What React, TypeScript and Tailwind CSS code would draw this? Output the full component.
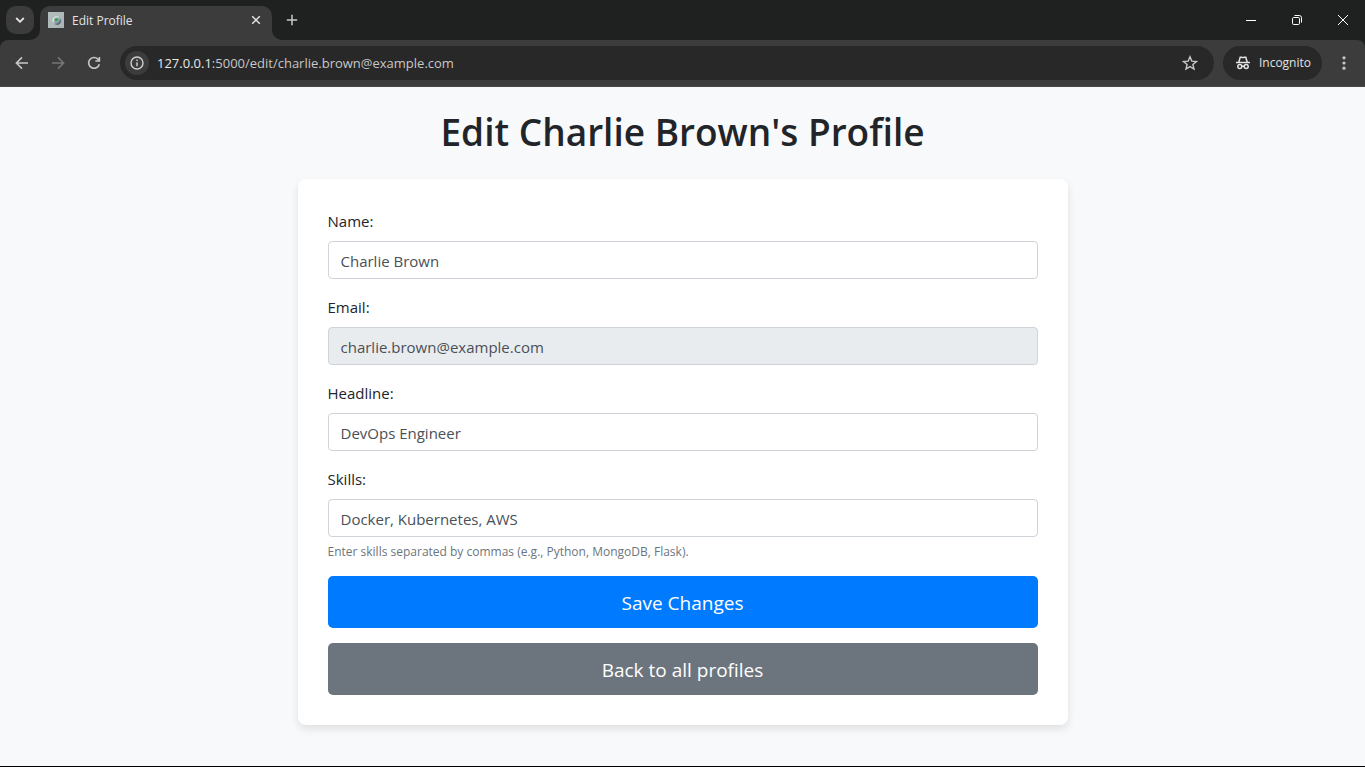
import { useState, type ReactNode } from "react";

function Flare({ className, flip }: { className: string; flip?: boolean }) {
  return (
    <svg viewBox="0 0 10 10" aria-hidden="true" className={className}>
      <path d={flip ? "M0 0a10 10 0 0 0 10 10H0Z" : "M10 0a10 10 0 0 1-10 10h10Z"} fill="#3c3c3c" />
    </svg>
  );
}

function Favicon() {
  return (
    <svg width="16" height="16" viewBox="0 0 16 16" aria-hidden="true">
      <defs>
        <linearGradient id="fav" x1="0" y1="0" x2="1" y2="1">
          <stop offset="0" stopColor="#b4bfbd" />
          <stop offset="1" stopColor="#a9b3b2" />
        </linearGradient>
        <linearGradient id="fav-ring" x1="0" y1="0" x2="1" y2="1">
          <stop offset="0.3" stopColor="#dde5e3" />
          <stop offset="0.8" stopColor="#4f6079" />
        </linearGradient>
      </defs>
      <rect width="16" height="16" fill="url(#fav)" />
      <circle cx="8.8" cy="8.6" r="4.4" fill="url(#fav-ring)" />
      <circle cx="8.6" cy="8.2" r="2.6" fill="#8fa5a4" />
      <circle cx="8.4" cy="7.8" r="1.5" fill="#22b14c" />
    </svg>
  );
}

function WindowButton({ label, children }: { label: string; children: ReactNode }) {
  return (
    <button aria-label={label} className="flex h-10 w-[46px] items-center justify-center pl-[2px]">
      <svg width="12" height="12" viewBox="0 0 12 12" fill="none" stroke="#fff" strokeWidth="1" aria-hidden="true">
        {children}
      </svg>
    </button>
  );
}

function TabStrip() {
  return (
    <div className="flex h-10 items-start">
      <button aria-label="Search tabs" className="mt-[6px] ml-[6px] flex size-7 items-center justify-center rounded-[10px] bg-[#3c3c3c]">
        <svg width="10" height="6" viewBox="0 0 10 6" fill="none" stroke="#e3e3e3" strokeWidth="1.8" aria-hidden="true">
          <path d="M1.2 1 5 4.8 8.8 1" />
        </svg>
      </button>
      <div className="relative mt-[6px] ml-[6px] flex h-[34px] w-[232px] items-center rounded-t-[10px] bg-[#3c3c3c] pr-[10px] pb-[6px] pl-2">
        <Flare className="absolute bottom-0 -left-[10px] size-[10px]" />
        <Favicon />
        <span className="ml-2 flex-1 pt-[2px] text-[12px] leading-4 text-[#e3e3e3]">Edit Profile</span>
        <button aria-label="Close tab" className="flex size-3 items-center justify-center">
          <svg width="10" height="10" viewBox="0 0 10 10" fill="none" stroke="#e3e3e3" strokeWidth="1.5" aria-hidden="true">
            <path d="m1.2 1.2 7.6 7.6m0-7.6L1.2 8.8" />
          </svg>
        </button>
        <Flare flip className="absolute -right-[10px] bottom-0 size-[10px]" />
      </div>
      <button aria-label="New tab" className="mt-[6px] ml-[6px] flex size-7 items-center justify-center">
        <svg width="12" height="12" viewBox="0 0 12 12" fill="none" stroke="#c7c7c7" strokeWidth="1.5" aria-hidden="true">
          <path d="M6 .8v10.4M.8 6h10.4" />
        </svg>
      </button>
      <div className="ml-auto flex">
        <WindowButton label="Minimize">
          <path d="M1 6.5h10" />
        </WindowButton>
        <WindowButton label="Restore">
          <rect x="1.5" y="3.5" width="7" height="7" rx="1.2" />
          <path d="M3.5 1.5h4.8a2.2 2.2 0 0 1 2.2 2.2v4.8" />
        </WindowButton>
        <WindowButton label="Close">
          <path d="m1 1 10 10M11 1 1 11" />
        </WindowButton>
      </div>
    </div>
  );
}

function Toolbar() {
  return (
    <div className="flex h-[47px] items-center rounded-t-lg border-b border-[#4a4a4a] bg-[#3c3c3c] pr-[11px] pl-3">
      <div className="flex items-center gap-4">
        <button aria-label="Back" className="flex size-5 items-center justify-center text-[#c7c7c7]">
          <svg width="14" height="14" viewBox="0 0 14 14" fill="none" stroke="currentColor" strokeWidth="1.6" aria-hidden="true">
            <path d="M13 7H1.8M7 1.4 1.4 7 7 12.6" />
          </svg>
        </button>
        <button aria-label="Forward" className="flex size-5 items-center justify-center text-[#757575]">
          <svg width="14" height="14" viewBox="0 0 14 14" fill="none" stroke="currentColor" strokeWidth="1.6" aria-hidden="true">
            <path d="M1 7h11.2M7 1.4 12.6 7 7 12.6" />
          </svg>
        </button>
        <button aria-label="Reload" className="flex size-5 items-center justify-center text-[#c7c7c7]">
          <svg width="14" height="14" viewBox="0 0 14 14" fill="none" stroke="currentColor" strokeWidth="1.6" aria-hidden="true">
            <path d="M12.3 8.2A5.4 5.4 0 1 1 11 3.2l1.2 1.3M12.4 1v4H8.4" />
          </svg>
        </button>
      </div>
      <div className="ml-4 flex h-[34px] flex-1 items-center rounded-full bg-[#282828] pr-4 pl-[5px]">
        <button aria-label="Site information" className="flex size-6 items-center justify-center rounded-full bg-[#3c3c3c]">
          <svg width="14" height="14" viewBox="0 0 14 14" fill="none" stroke="#d0d0d0" strokeWidth="1.4" aria-hidden="true">
            <circle cx="7" cy="7" r="6" />
            <path d="M7 6.2v4M7 3.6v1.5" />
          </svg>
        </button>
        <span className="ml-2 flex-1 text-[13px] leading-5 text-[#c7c7c7]">
          <span className="text-[#e8e8e8]">127.0.0.1</span>:5000/edit/charlie.brown@example.com
        </span>
        <button aria-label="Bookmark this page" className="flex size-4 items-center justify-center">
          <svg width="16" height="16" viewBox="0 0 16 16" fill="none" stroke="#c7c7c7" strokeWidth="1.4" aria-hidden="true">
            <path d="m8 1.8 1.8 4.3 4.7.4-3.6 3 1.1 4.6L8 11.6l-4 2.5 1.1-4.6-3.6-3 4.7-.4Z" />
          </svg>
        </button>
      </div>
      <button className="ml-[9px] flex h-[34px] items-center gap-2 rounded-full bg-[#282828] pr-[11px] pl-3 text-[12px] leading-4 text-[#e3e3e3]">
        <svg width="16" height="16" viewBox="0 0 16 16" fill="none" stroke="#e3e3e3" strokeWidth="1.5" aria-hidden="true">
          <path d="M1 7.5h14M3.8 7.2 5.2 2.2h1.2q1.6.7 3.2 0h1.2l1.4 5" />
          <circle cx="4.8" cy="11.6" r="2" />
          <circle cx="11.2" cy="11.6" r="2" />
          <path d="M6.8 11.2h2.4" />
        </svg>
        Incognito
      </button>
      <button aria-label="Menu" className="ml-3 flex h-6 w-5 items-center justify-center">
        <svg width="4" height="16" viewBox="0 0 4 16" fill="#c7c7c7" aria-hidden="true">
          <circle cx="2" cy="2.8" r="1.6" />
          <circle cx="2" cy="8" r="1.6" />
          <circle cx="2" cy="13.2" r="1.6" />
        </svg>
      </button>
    </div>
  );
}

interface FieldProps {
  id: string;
  label: string;
  initial: string;
  readOnly?: boolean;
  hint?: string;
}

function Field({ id, label, initial, readOnly, hint }: FieldProps) {
  const [value, setValue] = useState(initial);
  return (
    <div className="mb-4">
      <label htmlFor={id} className="mb-2 block text-[15px] leading-6 text-[#212529]">
        {label}
      </label>
      <input
        id={id}
        type="text"
        value={value}
        readOnly={readOnly}
        aria-describedby={hint ? `${id}-hint` : undefined}
        onChange={(e) => setValue(e.target.value)}
        className="block h-[38px] w-full rounded border border-[#ced4da] bg-white px-3 pt-[2px] text-[15px] text-[#495057] read-only:bg-[#e9ecef] focus:outline-none"
      />
      {hint && (
        <small id={`${id}-hint`} className="mt-[6px] block text-[12px] leading-[17px] text-[#6c757d]">
          {hint}
        </small>
      )}
    </div>
  );
}

function EditProfile() {
  return (
    <main className="flex-1 border-b border-black bg-[#f8f9fa] px-4 pt-5 pb-10">
      <h1 className="text-center text-[37px] leading-[50px] font-semibold text-[#212529]">Edit Charlie Brown's Profile</h1>
      <form
        onSubmit={(e) => e.preventDefault()}
        className="mx-auto mt-[22px] max-w-[770px] rounded-lg bg-white p-[30px] shadow-[0_4px_8px_rgba(0,0,0,0.1)]"
      >
        <Field id="name" label="Name:" initial="Charlie Brown" />
        <Field id="email" label="Email:" initial="charlie.brown@example.com" readOnly />
        <Field id="headline" label="Headline:" initial="DevOps Engineer" />
        <Field
          id="skills"
          label="Skills:"
          initial="Docker, Kubernetes, AWS"
          hint="Enter skills separated by commas (e.g., Python, MongoDB, Flask)."
        />
        <button type="submit" className="block h-[52px] w-full rounded-[5px] bg-[#007bff] pt-[2px] text-center text-[19px] text-white">
          Save Changes
        </button>
        <a href="#profiles" className="mt-[15px] flex h-[52px] items-center justify-center rounded-[5px] bg-[#6c757d] pt-[2px] text-[19px] text-white">
          Back to all profiles
        </a>
      </form>
    </main>
  );
}

export default function App() {
  return (
    <div className="flex min-h-screen flex-col font-['Open_Sans','Noto_Sans',sans-serif]">
      <header className="bg-[#1f2020]">
        <TabStrip />
        <Toolbar />
      </header>
      <EditProfile />
    </div>
  );
}
